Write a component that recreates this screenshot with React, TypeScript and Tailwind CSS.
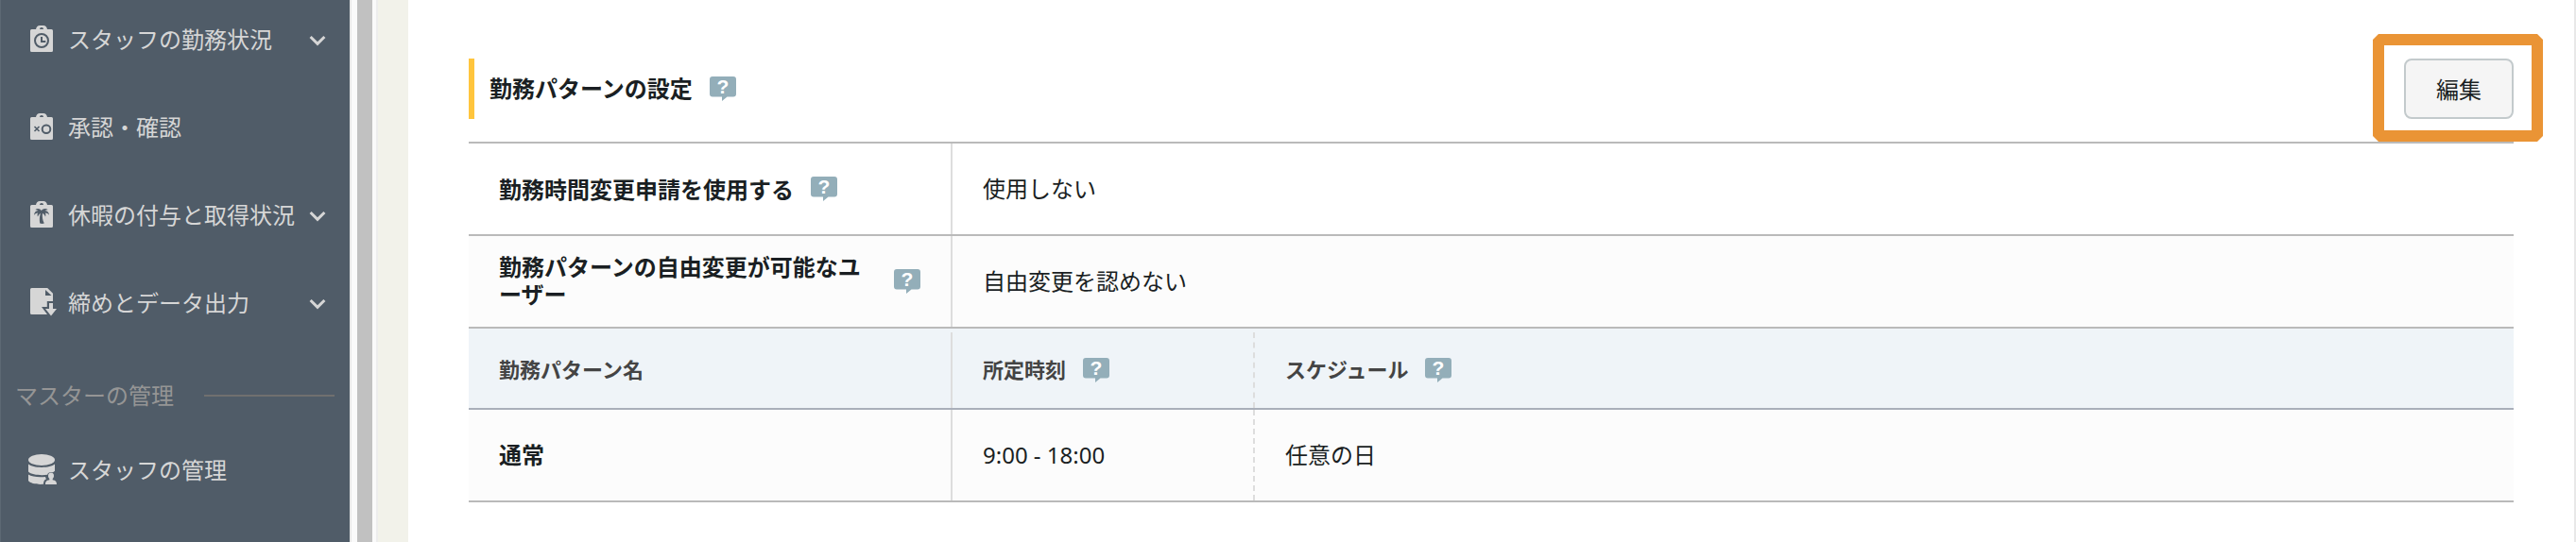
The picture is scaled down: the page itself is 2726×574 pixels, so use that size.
import type { ReactNode } from "react";

function ChevronDown() {
  return (
    <svg className="w-[18px] h-3" viewBox="0 0 18 12" fill="none">
      <path d="M1.6 2l7.4 7.4L16.4 2" stroke="#d6d6d6" strokeWidth={3} />
    </svg>
  );
}

function HelpIcon() {
  return (
    <svg className="w-7 h-[26px] shrink-0 overflow-visible" viewBox="0 0 28 26">
      <path
        fill="#93aeb9"
        d="M3 0h22a3 3 0 013 3v15.500a3 3 0 01-3 3h-6.500L13 26v-4.500H3a3 3 0 01-3-3V3a3 3 0 013-3z"
      />
      <text
        x="14"
        y="18"
        fill="#fff"
        fontSize="21"
        textAnchor="middle"
        className="font-['Liberation_Sans',sans-serif] font-bold"
      >
        ?
      </text>
    </svg>
  );
}

function TagIcon({ children }: { children: ReactNode }) {
  return (
    <svg className="w-6 h-7" viewBox="0 0 24 28">
      <path
        fill="#d6d6d6"
        fillRule="evenodd"
        d="M6 4c.5-2.500 2-4 4-4h4c2 0 3.500 1.500 4 4h4.500A1.500 1.500 0 0124 5.500v21a1.500 1.500 0 01-1.500 1.500h-21A1.500 1.500 0 010 26.500v-21A1.500 1.500 0 011.500 4zM10 4h4a2 2 0 00-4 0z"
      />
      {children}
    </svg>
  );
}

function ClockTagIcon() {
  return (
    <TagIcon>
      <circle cx="12" cy="16" r="7" fill="none" stroke="#505c68" strokeWidth={2} />
      <path d="M12 12v5h4.300" fill="none" stroke="#505c68" strokeWidth={2} />
    </TagIcon>
  );
}

function ApprovalTagIcon() {
  return (
    <TagIcon>
      <path d="M4.500 14l5 5M9.500 14l-5 5" stroke="#505c68" strokeWidth={1.6} />
      <circle cx="17" cy="16.700" r="4.300" fill="none" stroke="#505c68" strokeWidth={2} />
    </TagIcon>
  );
}

function PalmTagIcon() {
  return (
    <TagIcon>
      <path
        fill="#505c68"
        d="M11.800 10C10.500 7.600 7 7.200 5.300 9.300c1.400-.2 2.300 0 3 .6C5.800 10.200 4 12.200 4 15c1.200-1.600 2.500-2.300 4-2.400-.6 1.200-.6 2.500 0 4 .6-1.700 1.500-2.900 2.800-3.600-1.100 3.600-1.100 7 -.6 10.600 1.600.6 3.200.6 4.600 0-1.800-3.400-2.300-7-1.800-10.600 1.500.7 2.600 1.900 3 3.600.6-1.500.5-2.800-.1-4 1.600.1 3 .8 4.100 2.200 0-2.600-1.900-4.600-4.300-4.900.7-.6 1.700-.8 3.100-.6-2-2-5.500-1.700-7 .7z"
      />
    </TagIcon>
  );
}

function FileExportIcon() {
  return (
    <svg className="w-7 h-[30px]" viewBox="0 0 28 30" fill="#d6d6d6">
      <path d="M1.500 0H16v8h8v6h-6.200v6H12l6 8H1.500A1.500 1.500 0 010 26.500v-25A1.500 1.500 0 011.500 0z" />
      <path d="M16 0h2.200L24 5.800V8h-1.500L16 2z" />
      <path d="M20 16h4v6h4l-6 7.500L16 22h4z" />
    </svg>
  );
}

function StaffDatabaseIcon() {
  return (
    <svg className="w-[30px] h-8 -ml-0.5" viewBox="0 0 30 32" fill="#d6d6d6">
      <ellipse cx="14" cy="6" rx="14" ry="6" />
      <path d="M0 10.500c2.500 2.300 8 3.400 14 3.400s11.500-1.100 14-3.400v7.300c-.8.900-1.700 1.200-2.200 1.500-2.500-1-5 .2-5.600 2.400-6.200 1-16.700.4-20.200-3.200z" />
      <path d="M0 21.500c3.500 2.400 11.500 3.300 18 2.400.2 1 .5 1.700 1 2.300-1.800.8-2.900 2.100-3 5.600-7 .5-14-.8-16-3.800z" />
      <path d="M24 19.500c2 0 3 1.500 3 3.400 0 1.500-.7 2.300-1.300 3.100v1.200c2.500.6 4.300 1 4.300 4.800H18c0-3.800 1.800-4.200 4.300-4.800V26c-.6-.8-1.300-1.600-1.300-3.100 0-1.900 1-3.400 3-3.400z" />
    </svg>
  );
}

interface MenuItemProps {
  icon: ReactNode;
  label: string;
  expandable?: boolean;
}

function MenuItem({ icon, label, expandable }: MenuItemProps) {
  return (
    <a className="flex items-center h-[93px] pl-[31px] pr-[25px] text-[#d6d6d6] whitespace-nowrap">
      <span className="w-10 -mt-[3px] shrink-0">{icon}</span>
      <span className="flex-1 -mt-px">{label}</span>
      {expandable && <ChevronDown />}
    </a>
  );
}

function Sidebar() {
  return (
    <nav className="w-[370px] shrink-0 overflow-hidden bg-[#505c68] border-l border-[#5d6974]">
      <div className="-mt-1">
        <MenuItem icon={<ClockTagIcon />} label="スタッフの勤務状況" expandable />
        <MenuItem icon={<ApprovalTagIcon />} label="承認・確認" />
        <MenuItem icon={<PalmTagIcon />} label="休暇の付与と取得状況" expandable />
        <MenuItem icon={<FileExportIcon />} label="締めとデータ出力" expandable />
        <div className="flex items-center h-[102px] pl-[15px] pr-4 text-[#959595]">
          <span className="w-[200px] -mt-px">マスターの管理</span>
          <span className="flex-1 h-0.5 bg-[#70706f]" />
        </div>
        <div className="-mt-[18px]">
          <MenuItem icon={<StaffDatabaseIcon />} label="スタッフの管理" />
        </div>
      </div>
    </nav>
  );
}

function Scrollbar() {
  return (
    <div className="w-[30px] shrink-0 bg-[#fafafa] border-l-2 border-l-[#e8e8e8] border-r-2 border-r-[#ededed] pl-1.5 pr-1">
      <div className="h-full bg-[#c1c1c1]" />
    </div>
  );
}

interface SettingRowProps {
  label: ReactNode;
  value: string;
  className: string;
}

function SettingRow({ label, value, className }: SettingRowProps) {
  return (
    <div className={`flex h-[98px] border-b-2 border-[#bababa] ${className}`}>
      <div className="flex items-center w-[512px] pl-8 pr-8 border-r-2 border-[#dddddd] font-bold leading-[29px]">
        {label}
      </div>
      <div className="flex items-center pl-8">{value}</div>
    </div>
  );
}

export default function App() {
  return (
    <div className="flex w-[2726px] h-[574px] overflow-hidden bg-white text-2xl text-[#1a1f23] font-['Noto_Sans','Noto_Sans_CJK_JP',sans-serif]">
      <Sidebar />
      <Scrollbar />
      <div className="w-8 shrink-0 bg-[#f2f2ea]" />

      <main className="flex-1 pl-16 pr-16 pt-[62px] border-r-2 border-[#e8e8e8]">
        <div className="flex items-center justify-between h-16 mb-6">
          <div className="flex items-center gap-[18px] h-full pl-4 border-l-6 border-[#ffc53d]">
            <h2 className="font-bold">勤務パターンの設定</h2>
            <HelpIcon />
          </div>
          <div className="relative">
            <button className="block w-[116px] h-16 pt-0.5 rounded-lg border-2 border-[#c3cacc] bg-[#f5f5f5]">
              編集
            </button>
            <div className="absolute -left-[33px] -top-[26px] w-[180px] h-[114px] border-12 border-[#ea9435] [clip-path:polygon(6px_0,174px_0,180px_6px,180px_108px,174px_114px,6px_114px,0_108px,0_6px)]" />
          </div>
        </div>

        <div className="border-t-2 border-[#bababa]">
          <SettingRow
            className="bg-white"
            label={
              <>
                <span className="mr-[18px]">勤務時間変更申請を使用する</span>
                <HelpIcon />
              </>
            }
            value="使用しない"
          />
          <SettingRow
            className="bg-[#fcfcfc]"
            label={
              <>
                <span className="flex-1 -mt-0.5">
                  勤務パターンの自由変更が可能なユ
                  <br />
                  ーザー
                </span>
                <HelpIcon />
              </>
            }
            value="自由変更を認めない"
          />

          <div className="flex h-[86px] pt-1 bg-[#eff4f8] border-b-2 border-[#a9afba] text-[22px] font-bold text-[#444444]">
            <div className="flex items-center w-[512px] pl-8 border-r-2 border-[#dddddd]">勤務パターン名</div>
            <div className="flex items-center gap-[18px] w-80 pl-8 border-r-2 border-dashed border-[#dddddd]">
              所定時刻
              <HelpIcon />
            </div>
            <div className="flex items-center gap-[18px] pl-8">
              スケジュール
              <HelpIcon />
            </div>
          </div>

          <div className="flex h-[98px] bg-[#fcfcfc] border-b-2 border-[#bababa]">
            <div className="flex items-center w-[512px] pl-8 border-r-2 border-[#dddddd] font-bold">通常</div>
            <div className="flex items-center w-80 pl-8 border-r-2 border-dashed border-[#dddddd]">
              9:00 - 18:00
            </div>
            <div className="flex items-center pl-8">任意の日</div>
          </div>
        </div>
      </main>
    </div>
  );
}
